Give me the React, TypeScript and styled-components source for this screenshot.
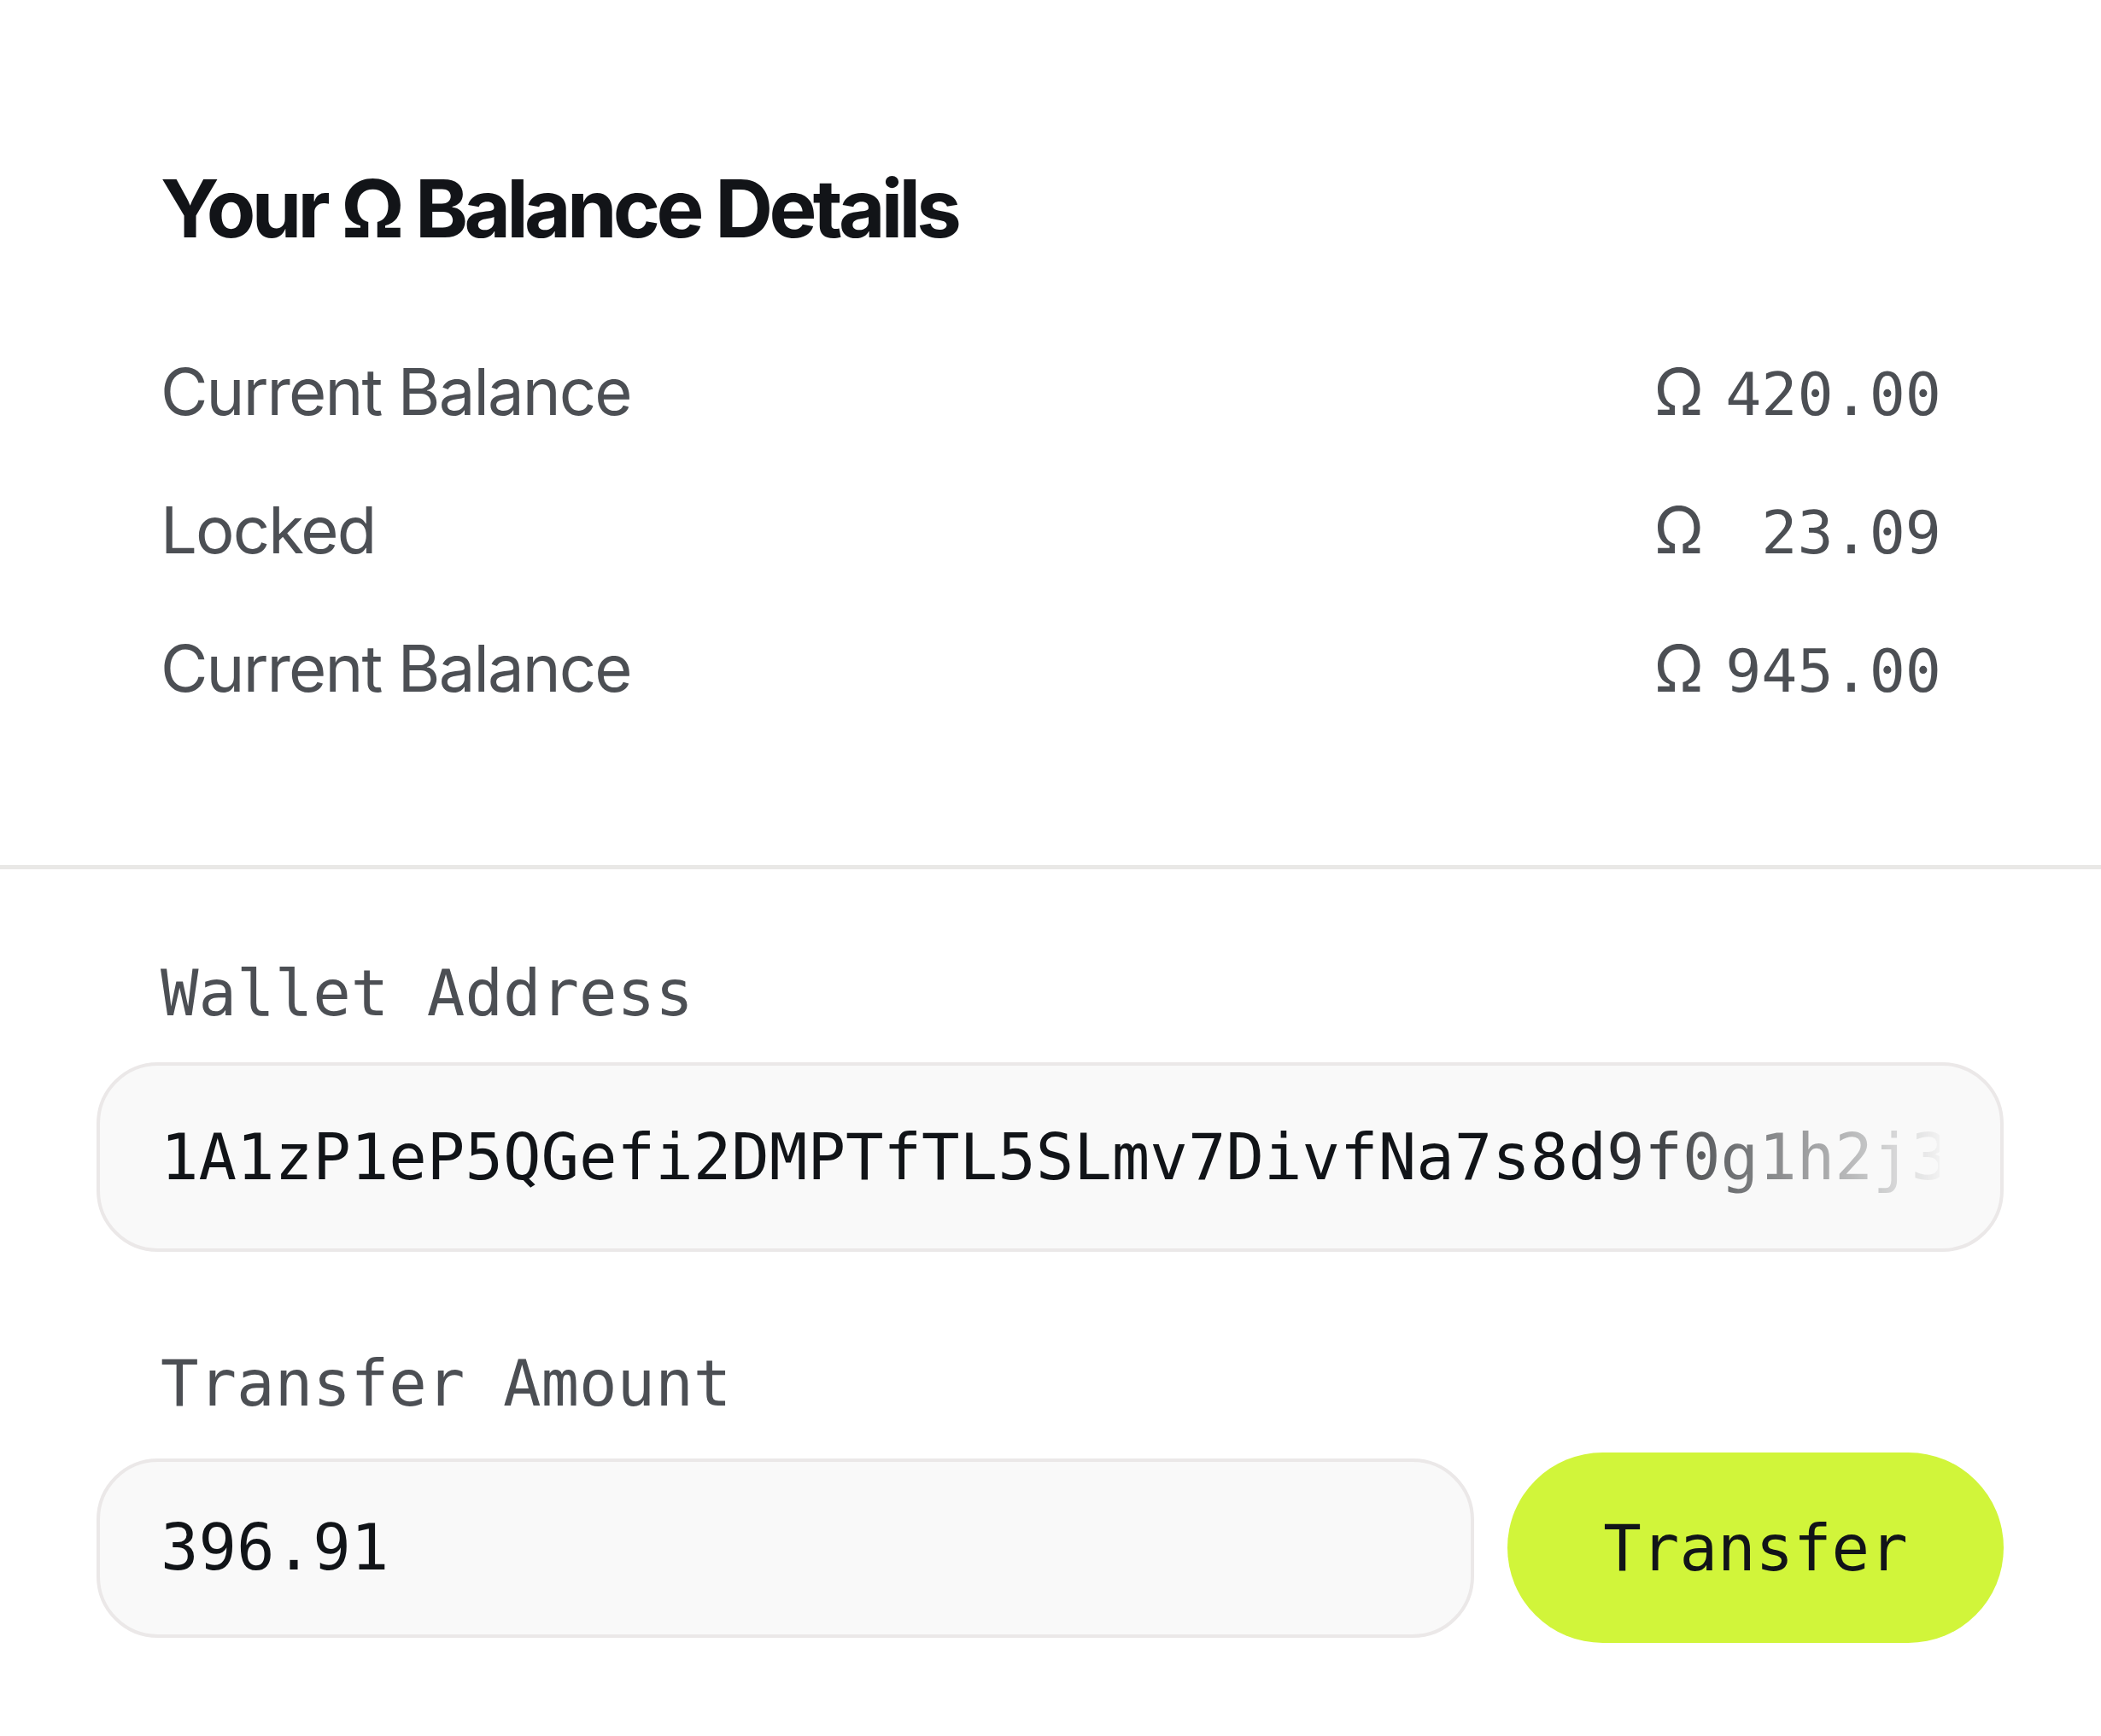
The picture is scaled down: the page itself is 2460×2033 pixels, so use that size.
import styled, { createGlobalStyle } from "styled-components";

const balances = [
  { label: "Current Balance", amount: "420.00" },
  { label: "Locked", amount: "23.09" },
  { label: "Current Balance", amount: "945.00" },
];

const walletAddress = "1A1zP1eP5QGefi2DMPTfTL5SLmv7DivfNa7s8d9f0g1h2j3k4l5m6n7p8";

const App = () => {
  return (
    <>
      <GlobalStyle />
      <S.Card>
        <S.Balance>
          <S.Title>Your Ω Balance Details</S.Title>
          <S.List>
            {balances.map((item, i) => (
              <S.Row key={i}>
                <S.RowLabel>{item.label}</S.RowLabel>
                <S.Amount>
                  <S.Omega>Ω</S.Omega>
                  <S.Number>{item.amount.padStart(6, " ")}</S.Number>
                </S.Amount>
              </S.Row>
            ))}
          </S.List>
        </S.Balance>

        <S.Form>
          <S.Field>
            <S.FieldLabel>Wallet Address</S.FieldLabel>
            <S.InputBox height={222}>
              <S.Value fade>{walletAddress}</S.Value>
            </S.InputBox>
          </S.Field>

          <S.Field>
            <S.FieldLabel>Transfer Amount</S.FieldLabel>
            <S.AmountRow>
              <S.InputBox height={210} grow>
                <S.Value>396.91</S.Value>
              </S.InputBox>
              <S.Button>Transfer</S.Button>
            </S.AmountRow>
          </S.Field>
        </S.Form>
      </S.Card>
    </>
  );
};

const GlobalStyle = createGlobalStyle`
  html, body {
    margin: 0;
    padding: 0;
    background: #ffffff;
    overflow: hidden;
  }

  * {
    box-sizing: border-box;
  }
`;

const S = (() => {
  const sans = `Inter, "Noto Sans", "Liberation Sans", sans-serif`;
  const mono = `"DejaVu Sans Mono", "Liberation Mono", monospace`;

  const Card = styled.div`
    width: 100%;
    min-height: 2033px;
    background: #ffffff;
  `;

  const Balance = styled.section`
    padding: 197px 187px 193px 188px;
    border-bottom: 5px solid #e9e8e6;
  `;

  const Title = styled.h2`
    margin: 0;
    font-family: ${sans};
    font-weight: 700;
    font-size: 94px;
    line-height: 1;
    letter-spacing: -0.05em;
    color: #121418;
  `;

  const List = styled.div`
    display: flex;
    flex-direction: column;
    gap: 86px;
    margin-top: 129px;
  `;

  const Row = styled.div`
    display: flex;
    justify-content: space-between;
    align-items: center;
    height: 76px;
  `;

  const RowLabel = styled.span`
    font-family: ${sans};
    font-size: 76px;
    line-height: 1;
    letter-spacing: -0.025em;
    color: #4c4f54;
  `;

  const Amount = styled.span`
    display: flex;
    align-items: center;
    gap: 25px;
    color: #4c4f54;
  `;

  const Omega = styled.span`
    font-family: ${sans};
    font-size: 76px;
    line-height: 1;
  `;

  const Number = styled.span`
    font-family: ${mono};
    font-size: 70px;
    line-height: 1;
    white-space: pre;
    position: relative;
    top: 4px;
  `;

  const Form = styled.section`
    display: flex;
    flex-direction: column;
    gap: 117px;
    padding: 108px 114px 0 113px;
  `;

  const Field = styled.div`
    display: flex;
    flex-direction: column;
  `;

  const FieldLabel = styled.label`
    padding-left: 75px;
    margin-bottom: 44px;
    font-family: ${mono};
    font-size: 74px;
    line-height: 1;
    color: #4c4f54;
  `;

  const InputBox = styled.div<{ height: number; grow?: boolean }>`
    flex: ${({ grow }) => (grow ? "1 1 0" : "none")};
    display: flex;
    align-items: center;
    min-width: 0;
    height: ${({ height }) => height}px;
    padding: 0 71px;
    background: #f9f9f9;
    border: 4px solid #ebe8e8;
    border-radius: 72px;
  `;

  const Value = styled.span<{ fade?: boolean }>`
    display: block;
    width: 100%;
    overflow: hidden;
    white-space: nowrap;
    font-family: ${mono};
    font-size: 74px;
    line-height: 1.2;
    color: #111418;
    mask-image: ${({ fade }) =>
      fade
        ? "linear-gradient(to right, #000 0%, #000 80%, rgba(0,0,0,0.03) 100%)"
        : "none"};
  `;

  const AmountRow = styled.div`
    display: flex;
    align-items: center;
    gap: 39px;
  `;

  const Button = styled.button`
    flex: none;
    width: 581px;
    height: 223px;
    border: 0;
    border-radius: 999px;
    background: #d1f53a;
    color: #111418;
    font-family: ${mono};
    font-size: 74px;
    line-height: 1;
    cursor: pointer;
  `;

  return {
    Card,
    Balance,
    Title,
    List,
    Row,
    RowLabel,
    Amount,
    Omega,
    Number,
    Form,
    Field,
    FieldLabel,
    InputBox,
    Value,
    AmountRow,
    Button,
  };
})();

export default App;
